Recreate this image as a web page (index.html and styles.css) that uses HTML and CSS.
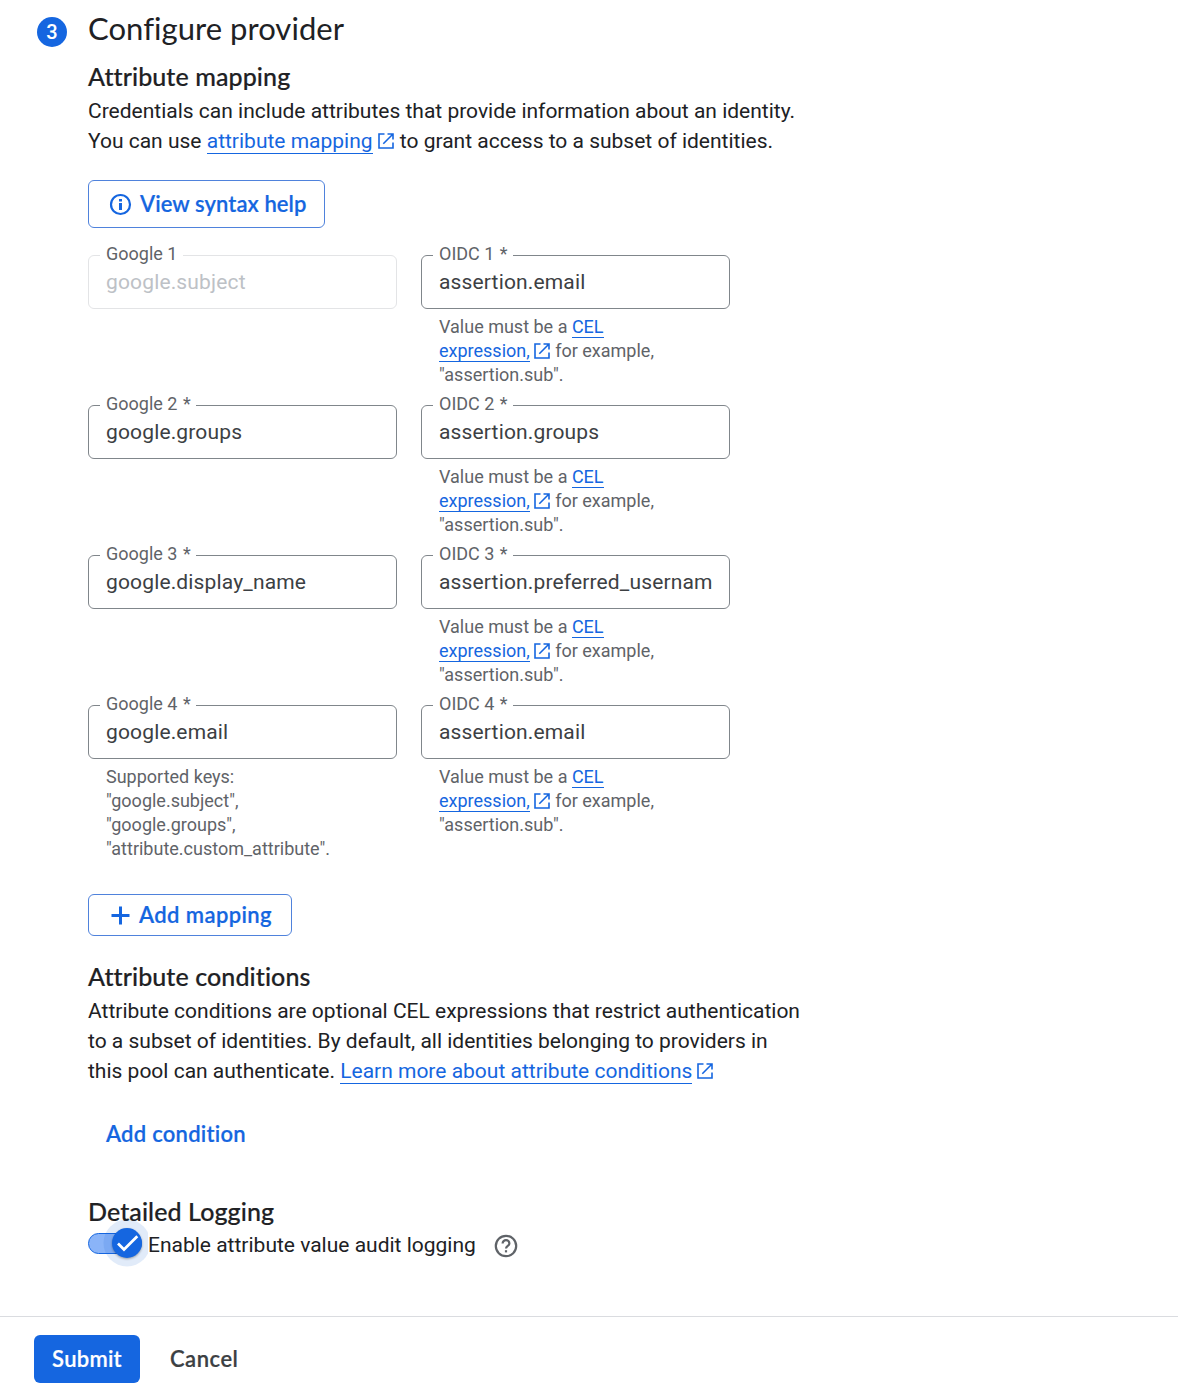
FILE: index.html
```html
<!DOCTYPE html>
<html lang="en">
<head>
<meta charset="utf-8">
<title>Configure provider</title>
<link rel="stylesheet" href="styles.css">
</head>
<body>
<svg class="defs" width="0" height="0" aria-hidden="true">
  <symbol id="launch" viewBox="0 0 18 18"><path d="M7.500 2H2v14h14v-5.500M10.500 2H16v5.500M16 2 6.300 11.700" fill="none" stroke="currentColor" stroke-width="1.600"/></symbol>
</svg>
<main class="step">
  <div class="badge">3</div>
  <div class="content">
    <h1 class="title">Configure provider</h1>
    <section>
      <h2 class="heading mapping">Attribute mapping</h2>
      <p class="text">Credentials can include attributes that provide information about an identity.<br>You can use <a class="link">attribute mapping</a><svg class="launch"><use href="#launch"/></svg> to grant access to a subset of identities.</p>
      <button class="button help"><svg width="22" height="22" viewBox="0 0 22 22"><circle cx="11" cy="11" r="9.500" fill="none" stroke="currentColor" stroke-width="2.200"/><path d="M9.500 5.500h3v2.600h-3zM9.500 9.500h3v7h-3z" fill="currentColor"/></svg><span>View syntax help</span></button>
      <div class="grid">
        <div><fieldset class="field disabled"><legend>Google 1</legend><div class="value">google.subject</div></fieldset></div>
        <div><fieldset class="field"><legend>OIDC 1 <span class="star">*</span></legend><div class="value">assertion.email</div></fieldset>
          <p class="hint">Value must be a <a class="link">CEL<br>expression,</a><svg class="launch"><use href="#launch"/></svg> for example,<br>"assertion.sub".</p></div>
        <div><fieldset class="field"><legend>Google 2 <span class="star">*</span></legend><div class="value">google.groups</div></fieldset></div>
        <div><fieldset class="field"><legend>OIDC 2 <span class="star">*</span></legend><div class="value">assertion.groups</div></fieldset>
          <p class="hint">Value must be a <a class="link">CEL<br>expression,</a><svg class="launch"><use href="#launch"/></svg> for example,<br>"assertion.sub".</p></div>
        <div><fieldset class="field"><legend>Google 3 <span class="star">*</span></legend><div class="value">google.display_name</div></fieldset></div>
        <div><fieldset class="field"><legend>OIDC 3 <span class="star">*</span></legend><div class="value">assertion.preferred_usernam</div></fieldset>
          <p class="hint">Value must be a <a class="link">CEL<br>expression,</a><svg class="launch"><use href="#launch"/></svg> for example,<br>"assertion.sub".</p></div>
        <div><fieldset class="field"><legend>Google 4 <span class="star">*</span></legend><div class="value">google.email</div></fieldset>
          <p class="hint">Supported keys:<br>"google.subject",<br>"google.groups",<br>"attribute.custom_attribute".</p></div>
        <div><fieldset class="field"><legend>OIDC 4 <span class="star">*</span></legend><div class="value">assertion.email</div></fieldset>
          <p class="hint">Value must be a <a class="link">CEL<br>expression,</a><svg class="launch"><use href="#launch"/></svg> for example,<br>"assertion.sub".</p></div>
      </div>
      <button class="button add"><svg width="20" height="20" viewBox="0 0 20 20"><path d="M10.500 1.500v18M1.500 10.500h18" fill="none" stroke="currentColor" stroke-width="3"/></svg><span>Add mapping</span></button>
    </section>
    <section>
      <h2 class="heading conditions">Attribute conditions</h2>
      <p class="text">Attribute conditions are optional CEL expressions that restrict authentication<br>to a subset of identities. By default, all identities belonging to providers in<br>this pool can authenticate. <a class="link">Learn more about attribute conditions</a><svg class="launch"><use href="#launch"/></svg></p>
      <button class="button plain"><span>Add condition</span></button>
    </section>
    <section>
      <h2 class="heading logging">Detailed Logging</h2>
      <div class="toggle-row">
        <svg class="toggle" width="60" height="48" viewBox="0 0 60 48">
          <rect x=".5" y="14.500" width="53" height="20" rx="10" fill="#8ab4f8" stroke="#1566e0"/>
          <circle cx="39" cy="24" r="23.500" fill="#1967d2" fill-opacity=".13"/>
          <circle class="thumb" cx="39" cy="24" r="15" fill="#1566e0"/>
          <path d="m30 24.500 6 6L49.300 17.200" fill="none" stroke="#fff" stroke-width="2.700"/>
        </svg>
        <span class="toggle-label">Enable attribute value audit logging</span>
        <svg class="question" width="24" height="24" viewBox="0 0 24 24"><g fill="none" stroke="currentColor" stroke-width="2.200"><circle cx="12" cy="12" r="10.200"/><path d="M8.600 9.600c0-2 1.500-3.400 3.400-3.400s3.400 1.400 3.400 3.200c0 2.400-3.400 2.600-3.400 5.200"/></g><path d="M10.900 16.200h2.200v2.200h-2.200z" fill="currentColor"/></svg>
      </div>
    </section>
  </div>
</main>
<footer class="footer">
  <button class="submit">Submit</button>
  <button class="cancel">Cancel</button>
</footer>
</body>
</html>
```
FILE: styles.css
```css
* { box-sizing: border-box; }
body { margin: 0; background: #fff; color: #202124; font-family: Roboto, sans-serif; height: 1394px; overflow: hidden; display: flex; flex-direction: column; }
h1, h2, p { margin: 0; }
button { font: inherit; cursor: pointer; background: none; border: 0; padding: 0; }
.defs { position: absolute; }
.step { height: 1316px; padding: 7px 0 0 37px; display: flex; align-items: flex-start; gap: 21px; }
.badge { width: 30px; height: 30px; margin-top: 10px; border-radius: 50%; background: #1566e0; color: #fff; text-align: center; font: 500 20px/30px Roboto, sans-serif; }
.content { width: 760px; }
.title { font: 400 31px/42px Lato, sans-serif; letter-spacing: .04px; white-space: nowrap; }
.heading { font: 500 25px/36px Lato, sans-serif; letter-spacing: .1px; -webkit-text-stroke: .2px currentColor; white-space: nowrap; }
.mapping { margin-top: 9px; margin-bottom: 2px; }
.text { font-size: 21px; line-height: 30px; white-space: nowrap; }
.link { color: #1566e0; border-bottom: 1px solid #1566e0; }
.launch { width: 18px; height: 18px; margin-left: 4px; color: #1566e0; vertical-align: -2px; }
.hint .launch { margin-left: 3px; vertical-align: -3px; }
.button { display: flex; align-items: center; border: 1px solid #4f82dc; border-radius: 6px; color: #1566e0; font: 600 22px/30px Lato, sans-serif; letter-spacing: .25px; -webkit-text-stroke: .2px currentColor; white-space: nowrap; }
.help { width: 237px; height: 48px; margin-top: 24px; padding-left: 20px; gap: 9px; letter-spacing: .08px; }
.help svg { transform: translate(.5px, .5px); }
.add { width: 204px; height: 42px; margin-top: 33px; padding-left: 21px; gap: 9px; letter-spacing: .4px; }
.plain { border: 0; margin: 33px 0 0 18px; }
.grid { display: grid; grid-template-columns: 309px 309px; column-gap: 24px; row-gap: 8px; margin-top: 17px; }
.field { height: 64px; margin: 0; padding: 0 0 0 11px; border: 1px solid #80868b; border-radius: 6px; min-width: 0; }
.field legend { padding: 0 5.500px 0 6px; height: 20px; font-size: 18px; line-height: 18px; color: #5f6368; }
.star { margin-left: 1px; }
.value { padding-left: 6px; margin-top: 2px; font-size: 21px; line-height: 30px; letter-spacing: .15px; color: #3c4043; white-space: nowrap; }
.disabled { border-color: #e3e4e6; }
.disabled .value { color: #bdc1c6; }
.hint { padding: 6px 0 0 18px; font-size: 18px; line-height: 24px; color: #5f6368; white-space: nowrap; }
.conditions { margin-top: 22px; margin-bottom: 2px; }
.logging { margin-top: 44px; }
.toggle-row { display: flex; align-items: center; height: 30px; margin-top: 1px; }
.toggle { flex: none; margin-top: -4px; }
.thumb { filter: drop-shadow(0 1px 1px #0005); }
.toggle-label { font-size: 21px; }
.question { margin-left: 18px; margin-top: 1px; color: #5f6368; }
.footer { height: 78px; border-top: 1px solid #dadce0; display: flex; align-items: flex-start; padding: 18px 34px; gap: 30px; font: 600 22px/48px Lato, sans-serif; letter-spacing: .25px; -webkit-text-stroke: .2px currentColor; }
.submit { width: 106px; height: 48px; border-radius: 6px; background: #1566e0; color: #fff; letter-spacing: inherit; }
.cancel { color: #3c4043; letter-spacing: .5px; }
```
